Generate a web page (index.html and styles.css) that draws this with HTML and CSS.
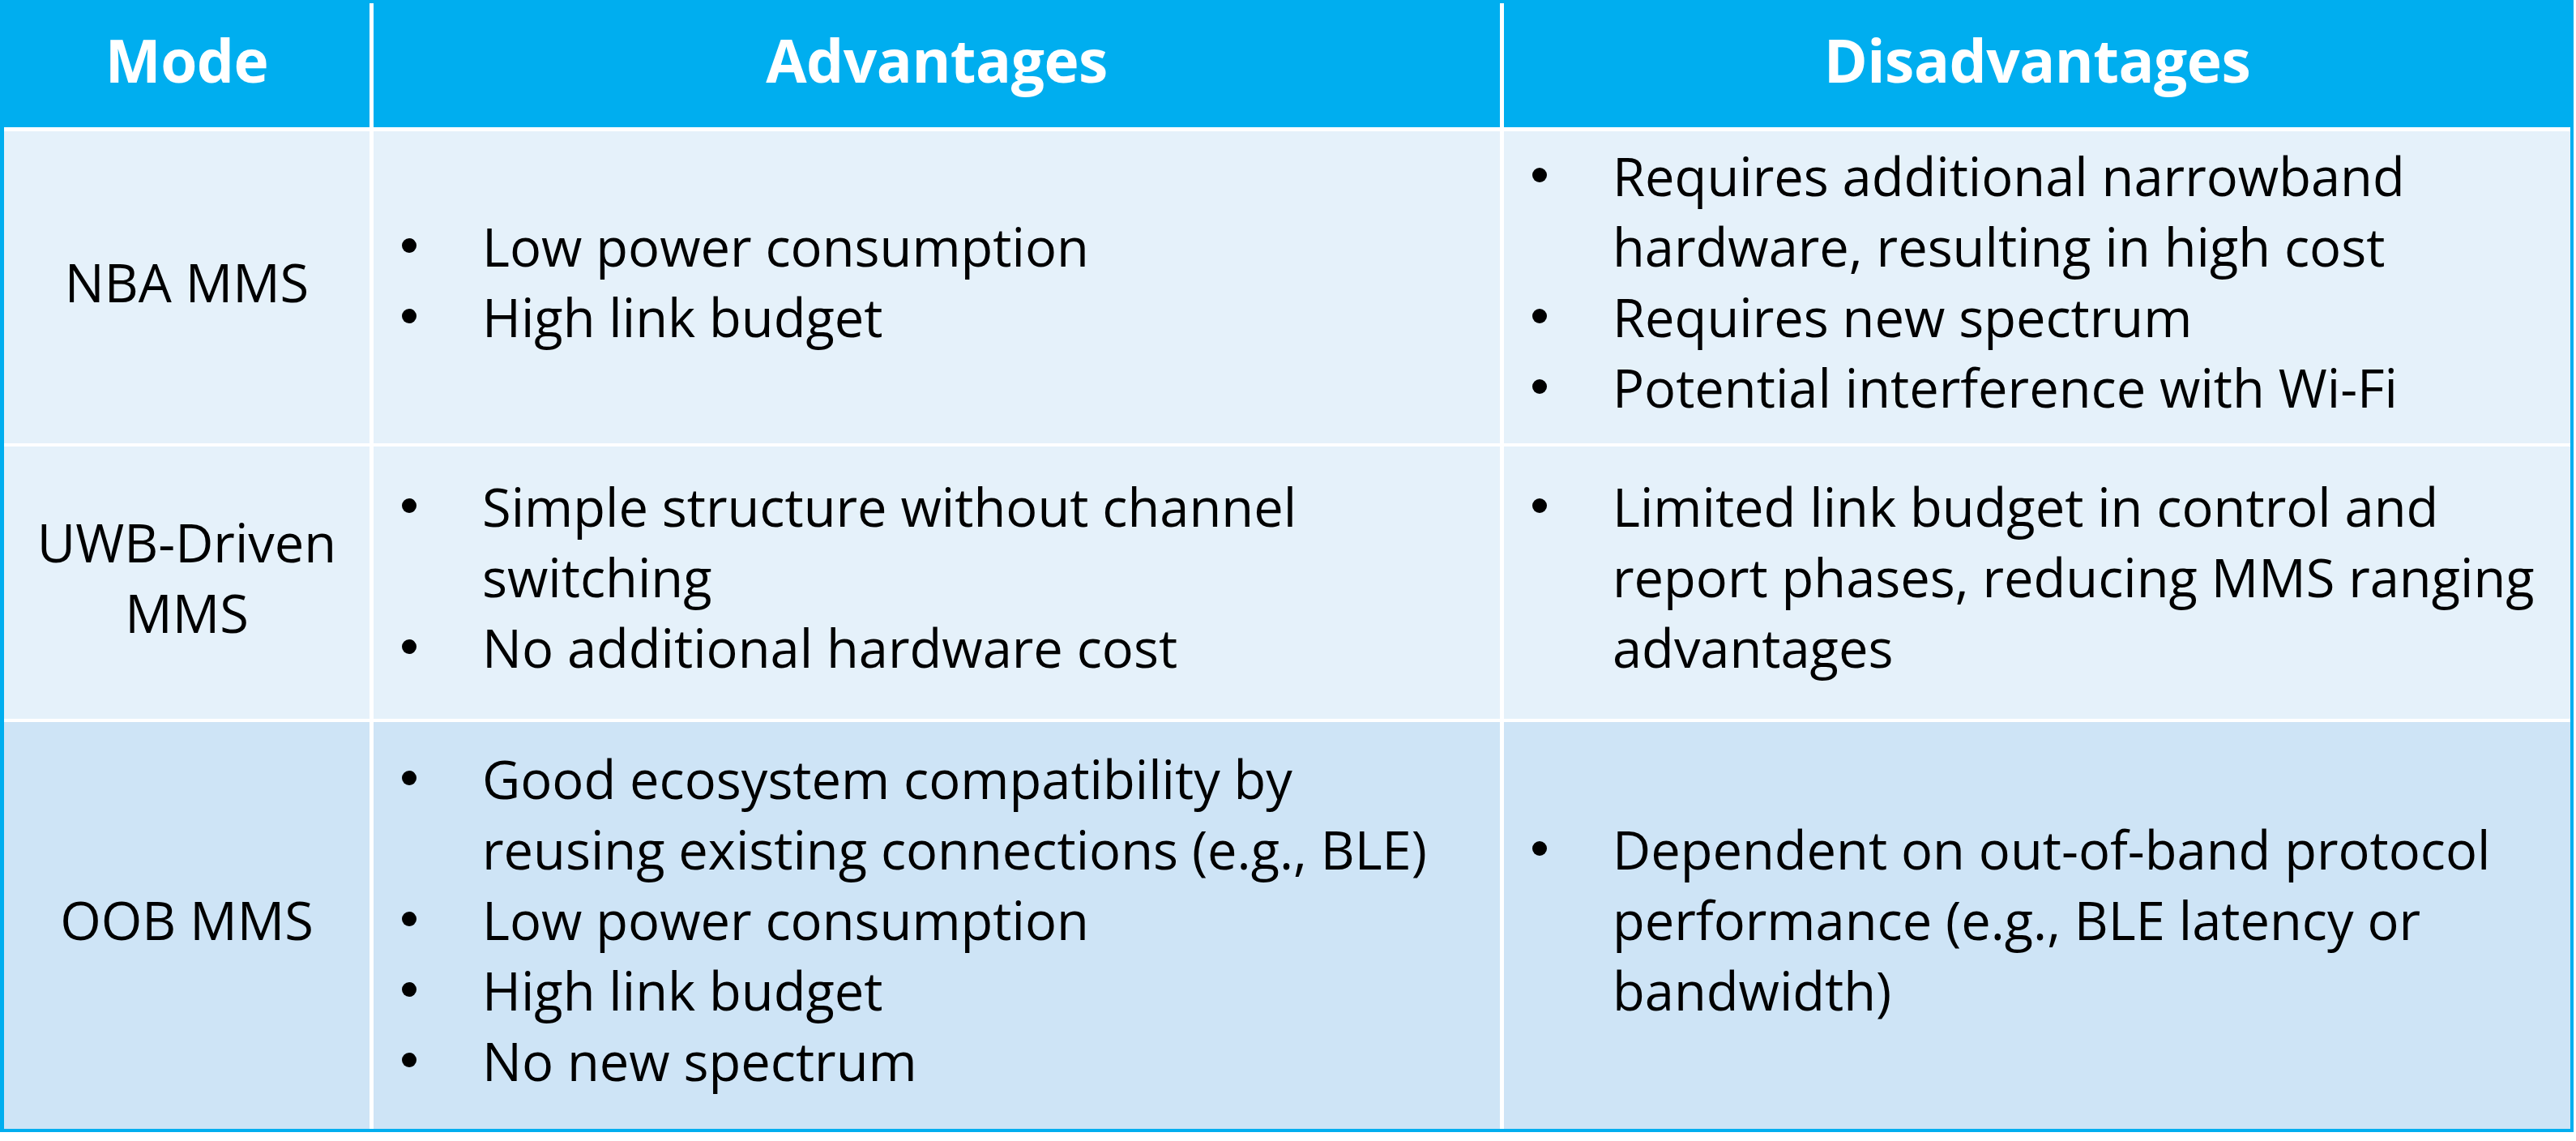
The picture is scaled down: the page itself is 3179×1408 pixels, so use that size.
FILE: index.html
```html
<!DOCTYPE html>
<html lang="en">
<head>
<meta charset="utf-8">
<title>MMS modes comparison</title>
<link rel="stylesheet" href="styles.css">
</head>
<body>
<div class="table">
  <div class="th">Mode</div>
  <div class="th">Advantages</div>
  <div class="th">Disadvantages</div>

  <div class="td mode r1">NBA MMS</div>
  <div class="td r1">
    <ul class="list">
      <li><span class="dot"></span><span class="txt">Low power consumption</span></li>
      <li><span class="dot"></span><span class="txt">High link budget</span></li>
    </ul>
  </div>
  <div class="td r1">
    <ul class="list">
      <li><span class="dot"></span><span class="txt">Requires additional narrowband<br>hardware, resulting in high cost</span></li>
      <li><span class="dot"></span><span class="txt">Requires new spectrum</span></li>
      <li><span class="dot"></span><span class="txt">Potential interference with Wi-Fi</span></li>
    </ul>
  </div>

  <div class="td mode r2">UWB-Driven<br>MMS</div>
  <div class="td r2">
    <ul class="list">
      <li><span class="dot"></span><span class="txt">Simple structure without channel<br>switching</span></li>
      <li><span class="dot"></span><span class="txt">No additional hardware cost</span></li>
    </ul>
  </div>
  <div class="td r2">
    <ul class="list">
      <li><span class="dot"></span><span class="txt">Limited link budget in control and<br>report phases, reducing MMS ranging<br>advantages</span></li>
    </ul>
  </div>

  <div class="td mode r3">OOB MMS</div>
  <div class="td r3">
    <ul class="list">
      <li><span class="dot"></span><span class="txt">Good ecosystem compatibility by<br>reusing existing connections (e.g., BLE)</span></li>
      <li><span class="dot"></span><span class="txt">Low power consumption</span></li>
      <li><span class="dot"></span><span class="txt">High link budget</span></li>
      <li><span class="dot"></span><span class="txt">No new spectrum</span></li>
    </ul>
  </div>
  <div class="td r3">
    <ul class="list">
      <li><span class="dot"></span><span class="txt">Dependent on out-of-band protocol<br>performance (e.g., BLE latency or<br>bandwidth)</span></li>
    </ul>
  </div>
</div>
</body>
</html>
```

FILE: styles.css
```css
html, body {
  margin: 0;
  padding: 0;
  background: #ffffff;
}

.table {
  width: 3176px;
  box-sizing: border-box;
  display: grid;
  grid-template-columns: 451px 1390px 1316px;
  grid-template-rows: 154px 385px 336px 502px;
  column-gap: 5px;
  row-gap: 4px;
  background: #ffffff;
  border-style: solid;
  border-color: #00aeef;
  border-width: 4px 4px 4px 5px;
  font-family: "Open Sans", "Liberation Sans", sans-serif;
  font-variant-ligatures: none;
  color: #000000;
}

.th {
  background: #00aeef;
  color: #ffffff;
  font-weight: 700;
  font-size: 73px;
  letter-spacing: -0.5px;
  display: flex;
  align-items: center;
  justify-content: center;
  margin-bottom: 1px;
  padding-bottom: 14px;
}

.td {
  display: flex;
  align-items: center;
  font-size: 65px;
  line-height: 87px;
  padding-bottom: 13px;
}

.r1, .r2 {
  background: #e5f1fa;
}

.r3 {
  background: #cee4f6;
}

.mode {
  justify-content: center;
  text-align: center;
}

.list {
  list-style: none;
  margin: 0;
  padding: 0 0 0 35px;
}

.list li {
  display: flex;
  align-items: flex-start;
}

.dot {
  flex: none;
  width: 18px;
  height: 18px;
  border-radius: 50%;
  background: #000000;
  margin-top: 33px;
  margin-right: 81px;
}

.txt {
  white-space: nowrap;
}
```
